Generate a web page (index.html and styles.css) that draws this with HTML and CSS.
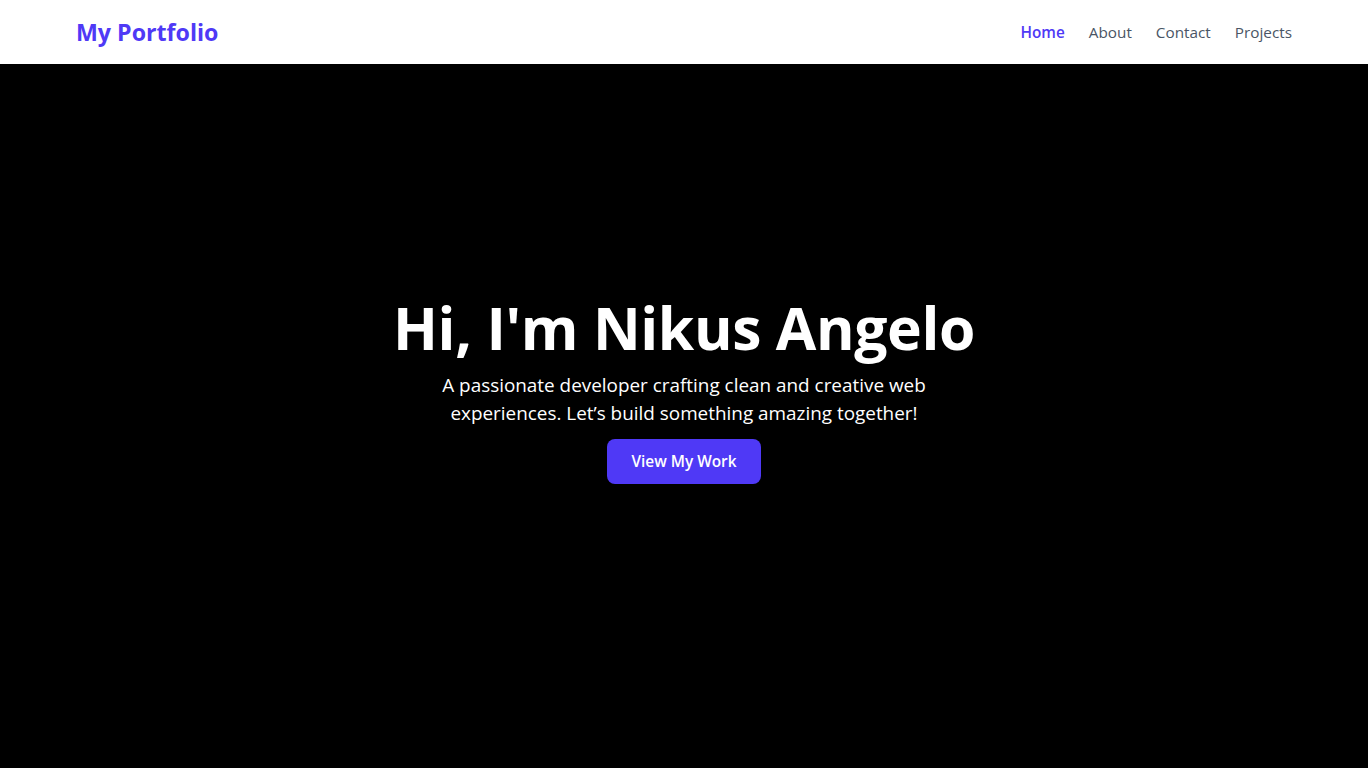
FILE: index.html
```html
<!DOCTYPE html>
<html lang="en">
<head>
<meta charset="utf-8">
<title>My Portfolio</title>
<link rel="stylesheet" href="styles.css">
</head>
<body>
<header class="navbar">
  <div class="nav-inner">
    <a class="logo" href="#">My Portfolio</a>
    <nav class="nav-links">
      <a class="nav-link active" href="#">Home</a>
      <a class="nav-link" href="#">About</a>
      <a class="nav-link" href="#">Contact</a>
      <a class="nav-link" href="#">Projects</a>
    </nav>
  </div>
</header>
<main class="hero">
  <div class="hero-content">
    <h1 class="hero-title">Hi, I'm Nikus Angelo</h1>
    <p class="hero-text">A passionate developer crafting clean and creative web experiences. Let’s build something amazing together!</p>
    <a class="btn" href="#">View My Work</a>
  </div>
</main>
</body>
</html>
```
FILE: styles.css
```css
* { box-sizing: border-box; }
html, body { margin: 0; padding: 0; }
body {
  font-family: "Open Sans", "Noto Sans", sans-serif;
  background: #000;
  color: #fff;
}
a { text-decoration: none; }
.navbar {
  background: #fff;
  height: 64px;
}
.nav-inner {
  max-width: 1280px;
  margin: 0 auto;
  padding: 0 32px;
  height: 100%;
  display: flex;
  align-items: center;
  justify-content: space-between;
}
.logo {
  color: #4f39f6;
  font-weight: 700;
  font-size: 23.2px;
}
.nav-links {
  display: flex;
  gap: 24px;
}
.nav-link {
  color: #4a5565;
  font-size: 15.3px;
}
.nav-link.active {
  color: #4f39f6;
  font-weight: 600;
}
.hero {
  height: 704px;
  display: flex;
  align-items: center;
  justify-content: center;
  padding-bottom: 52px;
}
.hero-content {
  display: flex;
  flex-direction: column;
  align-items: center;
  text-align: center;
}
.hero-title {
  margin: 0 0 14px;
  font-size: 58.8px;
  line-height: 60px;
  font-weight: 700;
  letter-spacing: -0.4px;
}
.hero-text {
  margin: 0 0 12px;
  max-width: 520px;
  font-size: 18.9px;
  line-height: 28px;
}
.btn {
  display: inline-block;
  background: #4f39f6;
  color: #fff;
  font-weight: 600;
  font-size: 15.4px;
  padding: 0 24px;
  height: 45px;
  line-height: 45px;
  border-radius: 8px;
}
```
